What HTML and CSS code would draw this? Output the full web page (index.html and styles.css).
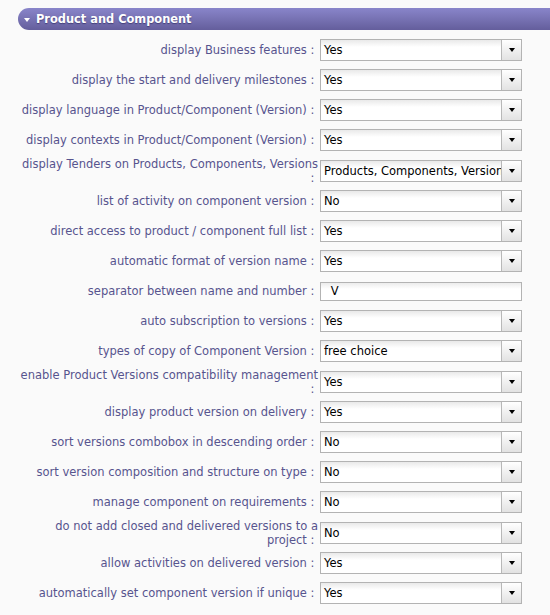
FILE: index.html
```html
<!DOCTYPE html>
<html>
<head>
<meta charset="utf-8">
<link rel="stylesheet" href="styles.css">
</head>
<body>
<div class="section">
  <div class="section-head"><span class="caret"></span><span class="title">Product and Component</span></div>
  <div class="form">
    <div class="row"><label class="lbl">display Business features :&nbsp;</label><div class="combo"><span class="val">Yes</span><span class="btn"><i></i></span></div></div>
    <div class="row"><label class="lbl">display the start and delivery milestones :&nbsp;</label><div class="combo"><span class="val">Yes</span><span class="btn"><i></i></span></div></div>
    <div class="row"><label class="lbl">display language in Product/Component (Version) :&nbsp;</label><div class="combo"><span class="val">Yes</span><span class="btn"><i></i></span></div></div>
    <div class="row"><label class="lbl">display contexts in Product/Component (Version) :&nbsp;</label><div class="combo"><span class="val">Yes</span><span class="btn"><i></i></span></div></div>
    <div class="row"><label class="lbl">display Tenders on Products, Components, Versions<br>:&nbsp;</label><div class="combo"><span class="val">Products, Components, Versions</span><span class="btn"><i></i></span></div></div>
    <div class="row"><label class="lbl">list of activity on component version :&nbsp;</label><div class="combo"><span class="val">No</span><span class="btn"><i></i></span></div></div>
    <div class="row"><label class="lbl">direct access to product / component full list :&nbsp;</label><div class="combo"><span class="val">Yes</span><span class="btn"><i></i></span></div></div>
    <div class="row"><label class="lbl">automatic format of version name :&nbsp;</label><div class="combo"><span class="val">Yes</span><span class="btn"><i></i></span></div></div>
    <div class="row"><label class="lbl">separator between name and number :&nbsp;</label><input class="text" type="text" value=" V"></div>
    <div class="row"><label class="lbl">auto subscription to versions :&nbsp;</label><div class="combo"><span class="val">Yes</span><span class="btn"><i></i></span></div></div>
    <div class="row"><label class="lbl">types of copy of Component Version :&nbsp;</label><div class="combo"><span class="val">free choice</span><span class="btn"><i></i></span></div></div>
    <div class="row"><label class="lbl">enable Product Versions compatibility management<br>:&nbsp;</label><div class="combo"><span class="val">Yes</span><span class="btn"><i></i></span></div></div>
    <div class="row"><label class="lbl">display product version on delivery :&nbsp;</label><div class="combo"><span class="val">Yes</span><span class="btn"><i></i></span></div></div>
    <div class="row"><label class="lbl">sort versions combobox in descending order :&nbsp;</label><div class="combo"><span class="val">No</span><span class="btn"><i></i></span></div></div>
    <div class="row"><label class="lbl">sort version composition and structure on type :&nbsp;</label><div class="combo"><span class="val">No</span><span class="btn"><i></i></span></div></div>
    <div class="row"><label class="lbl">manage component on requirements :&nbsp;</label><div class="combo"><span class="val">No</span><span class="btn"><i></i></span></div></div>
    <div class="row"><label class="lbl">do not add closed and delivered versions to a<br>project :&nbsp;</label><div class="combo"><span class="val">No</span><span class="btn"><i></i></span></div></div>
    <div class="row"><label class="lbl">allow activities on delivered version :&nbsp;</label><div class="combo"><span class="val">Yes</span><span class="btn"><i></i></span></div></div>
    <div class="row"><label class="lbl">automatically set component version if unique :&nbsp;</label><div class="combo"><span class="val">Yes</span><span class="btn"><i></i></span></div></div>
  </div>
</div>
</body>
</html>
```

FILE: styles.css
```css
html, body {
  margin: 0;
  padding: 0;
  background: #fafafa;
}
body {
  padding: 8px 0 0 18px;
  font-family: "DejaVu Sans", Verdana, sans-serif;
  overflow: hidden;
}
.section-head {
  height: 22px;
  border-radius: 11px 0 0 11px;
  background: linear-gradient(#8985ca, #7772b3 50%, #645e9c);
  display: flex;
  align-items: center;
  padding-left: 6px;
  color: #fff;
}
.caret {
  width: 0;
  height: 0;
  border-left: 3px solid transparent;
  border-right: 3px solid transparent;
  border-top: 4px solid #fff;
  margin-right: 6px;
  margin-top: 1px;
}
.title {
  font-weight: bold;
  font-size: 11.4px;
  text-shadow: 0 1px 1px rgba(40, 35, 90, 0.6);
}
.form {
  padding-top: 5px;
}
.row {
  display: flex;
  align-items: center;
  min-height: 30px;
}
.lbl {
  width: 300px;
  flex: none;
  text-align: right;
  font-size: 11.5px;
  line-height: 13.5px;
  padding: 3px 0 1px;
  color: #57548e;
  margin-right: 2px;
}
.combo {
  width: 202px;
  height: 22px;
  box-sizing: border-box;
  border: 1px solid #b3b3b3;
  background: linear-gradient(#e9e9e9, #ffffff 7px);
  display: flex;
  align-items: center;
  overflow: hidden;
}
.val {
  flex: 1;
  padding-left: 3px;
  font-size: 11.5px;
  color: #000;
  white-space: nowrap;
  overflow: hidden;
}
.btn {
  flex: none;
  width: 19px;
  height: 100%;
  border-left: 1px solid #b8b8b8;
  background: linear-gradient(#ffffff, #e2e2e2);
  display: flex;
  align-items: center;
  justify-content: center;
}
.btn i {
  width: 0;
  height: 0;
  border-left: 3px solid transparent;
  border-right: 3px solid transparent;
  border-top: 4px solid #000;
}
.text {
  width: 202px;
  height: 19px;
  box-sizing: border-box;
  margin: 0;
  border: 1px solid #b3b3b3;
  background: linear-gradient(#ececec, #ffffff 6px);
  font-family: "DejaVu Sans", Verdana, sans-serif;
  font-size: 11.5px;
  padding: 0 0 0 6px;
  color: #000;
  outline: none;
}
```
